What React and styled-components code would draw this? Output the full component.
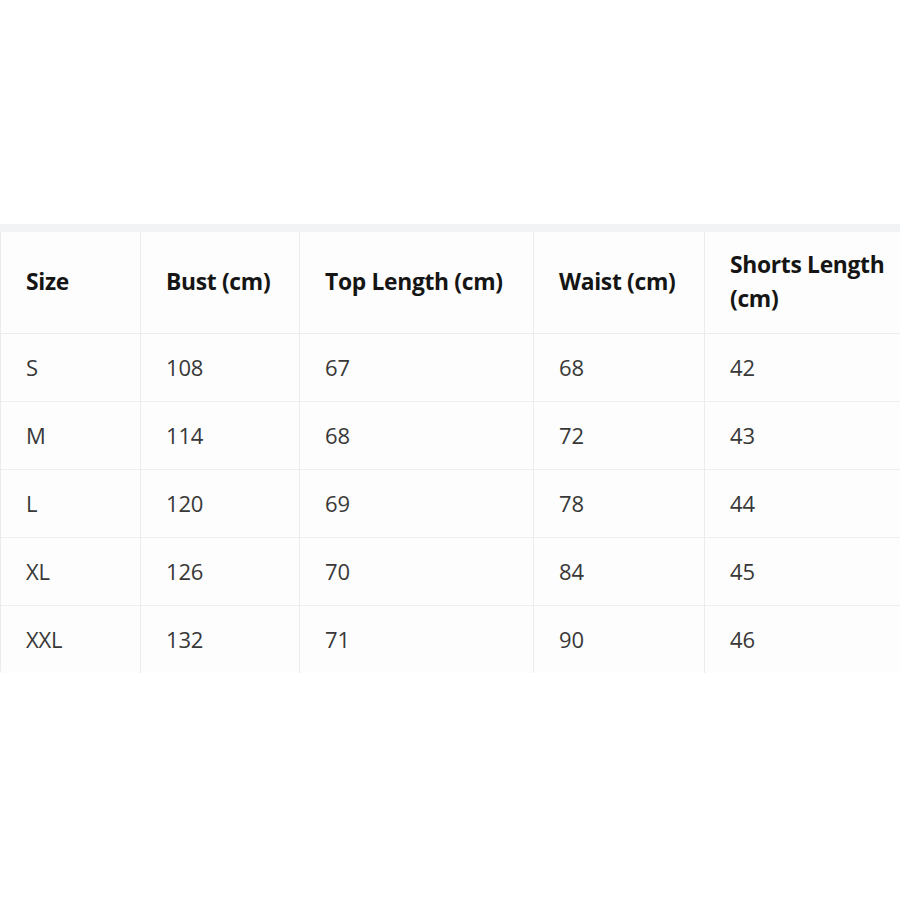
import React from "react";
import styled, { createGlobalStyle } from "styled-components";

const Global = createGlobalStyle`
  html, body { margin: 0; padding: 0; background: #ffffff; overflow: hidden; }
  body { width: 900px; height: 900px; }
`;

const Page = styled.div`
  width: 900px;
  height: 900px;
  overflow: hidden;
  padding-top: 224px;
  box-sizing: border-box;
`;

const Band = styled.div`
  height: 8px;
  width: 940px;
  background: #f1f3f5;
`;

const Table = styled.table`
  border-collapse: separate;
  border-spacing: 0;
  table-layout: fixed;
  width: 934px;
  background: #fcfdfc;
  border-left: 1px solid #e9ece9;
  border-bottom-left-radius: 4px;
  font-family: "Open Sans", "Noto Sans", sans-serif;
`;

const Col = styled.col`
  width: ${(p) => p.$w}px;
`;

const Th = styled.th`
  text-align: left;
  font-weight: 700;
  font-size: 22.8px;
  line-height: 34px;
  color: #151515;
  padding: 16px 20px 17px 25px;
  height: 68px;
  vertical-align: middle;
  border-right: 1px solid #eaedea;
  border-bottom: 1px solid #eaedea;
  letter-spacing: -0.3px;
`;

const Td = styled.td`
  font-size: 22px;
  line-height: 34px;
  color: #383838;
  padding: 16px 20px 17px 25px;
  border-right: 1px solid #eaedea;
  border-bottom: ${(p) => (p.$last ? "none" : "1px solid #edf0ed")};
  letter-spacing: -0.2px;
`;

const cols = [140, 159, 234, 171, 230];
const headers = ["Size", "Bust (cm)", "Top Length (cm)", "Waist (cm)", "Shorts Length (cm)"];
const rows = [
  ["S", "108", "67", "68", "42"],
  ["M", "114", "68", "72", "43"],
  ["L", "120", "69", "78", "44"],
  ["XL", "126", "70", "84", "45"],
  ["XXL", "132", "71", "90", "46"],
];

export default function App() {
  return (
    <Page>
      <Global />
      <Band />
      <Table>
        <colgroup>
          {cols.map((w, i) => (
            <Col key={i} $w={w} />
          ))}
        </colgroup>
        <thead>
          <tr>
            {headers.map((h) => (
              <Th key={h}>{h}</Th>
            ))}
          </tr>
        </thead>
        <tbody>
          {rows.map((r, ri) => (
            <tr key={ri}>
              {r.map((c, ci) => (
                <Td key={ci} $last={ri === rows.length - 1}>{c}</Td>
              ))}
            </tr>
          ))}
        </tbody>
      </Table>
    </Page>
  );
}
